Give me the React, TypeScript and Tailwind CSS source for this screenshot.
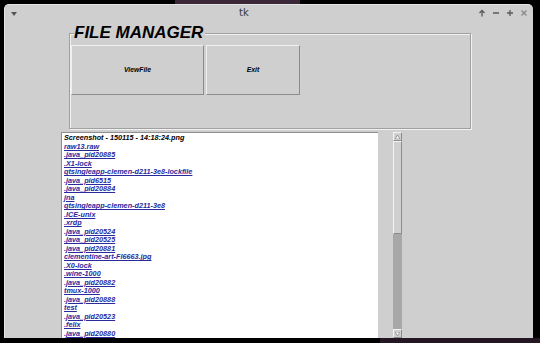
import React from 'react'

const files = [
  'Screenshot - 150115 - 14:18:24.png',
  'raw13.raw',
  '.java_pid20885',
  '.X1-lock',
  'qtsingleapp-clemen-d211-3e8-lockfile',
  '.java_pid6515',
  '.java_pid20884',
  'jna',
  'qtsingleapp-clemen-d211-3e8',
  '.ICE-unix',
  '.xrdp',
  '.java_pid20524',
  '.java_pid20525',
  '.java_pid20881',
  'clementine-art-FI6663.jpg',
  '.X0-lock',
  '.wine-1000',
  '.java_pid20882',
  'tmux-1000',
  '.java_pid20888',
  'test',
  '.java_pid20523',
  '.felix',
  '.java_pid20880',
]

function TitleButtons() {
  return (
    <div className="flex items-center gap-[6px] text-[#5a5a5a]">
      <svg width="8" height="8" viewBox="0 0 8 8" fill="none" stroke="currentColor" strokeWidth="1.3">
        <path d="M4 7.5V1.5M1.5 4L4 1.5 6.5 4" />
      </svg>
      <svg width="8" height="8" viewBox="0 0 8 8" fill="none" stroke="currentColor" strokeWidth="1.3">
        <path d="M1 4h6" />
      </svg>
      <svg width="8" height="8" viewBox="0 0 8 8" fill="none" stroke="currentColor" strokeWidth="1.3">
        <path d="M1 4h6M4 1v6" />
      </svg>
      <svg width="8" height="8" viewBox="0 0 8 8" fill="none" stroke="#8a8a8a" strokeWidth="1.3">
        <path d="M1.5 1.5l5 5M6.5 1.5l-5 5" />
      </svg>
    </div>
  )
}

export default function App() {
  return (
    <div className="relative h-[343px] w-[540px] overflow-hidden bg-black pl-[4px] pt-[4px]" style={{ fontFamily: '"Liberation Sans", Arial, sans-serif' }}>
      <div className="absolute left-[175px] top-0 h-[4px] w-[125px] bg-[#3b2838]" />
      <div className="absolute bottom-0 left-[380px] h-[5px] w-[160px] bg-[#241622]" />

      <div className="flex h-[334px] w-[529px] flex-col overflow-hidden rounded-t-[5px] border-l border-t border-[#e4e4e4] bg-[#cfcfcf]">
        {/* title bar */}
        <div className="flex h-[16px] shrink-0 items-center pl-[6px] pr-[5px]">
          <svg width="6" height="4" viewBox="0 0 6 4" className="mt-[1px]">
            <path d="M0 0h6L3 4z" fill="#555" />
          </svg>
          <span className="ml-[222px] text-[10px] leading-none text-[#3c3c3c]" style={{ fontFamily: '"DejaVu Sans", sans-serif' }}>tk</span>
          <div className="ml-auto">
            <TitleButtons />
          </div>
        </div>

        <div className="flex min-h-0 flex-1 flex-col pl-[56px]">
          {/* label frame */}
          <div className="relative ml-[8px] mt-[12px] h-[96px] w-[402px] shrink-0 border border-[#a0a0a0] shadow-[inset_1px_1px_0_#f2f2f2,1px_1px_0_#f2f2f2]">
            <span className="absolute left-[4px] top-[-11px] bg-[#cfcfcf] pr-[2px] text-[17px] font-bold italic leading-[20px] text-black">
              FILE MANAGER
            </span>
            <div className="ml-[1px] mt-[11px] flex gap-[2px]">
              <button className="flex h-[50px] w-[133px] items-center justify-center border border-b-[#8c8c8c] border-l-[#f0f0f0] border-r-[#8c8c8c] border-t-[#f0f0f0] bg-[#cfcfcf] text-[6.8px] font-bold italic text-black">
                ViewFile
              </button>
              <button className="flex h-[50px] w-[94px] items-center justify-center border border-b-[#8c8c8c] border-l-[#f0f0f0] border-r-[#8c8c8c] border-t-[#f0f0f0] bg-[#cfcfcf] text-[6.8px] font-bold italic text-black">
                Exit
              </button>
            </div>
          </div>

          {/* list + scrollbar */}
          <div className="mt-[3px] flex min-h-0 flex-1 items-stretch">
            <div className="w-[317px] overflow-hidden border-l border-t border-[#8e8e8e] bg-white pl-[2px] pt-[1px]">
              {files.map((f, i) => (
                <div
                  key={f + i}
                  className={
                    i === 0
                      ? 'h-[8.52px] whitespace-nowrap text-[7.25px] font-bold italic leading-[8.52px] text-black'
                      : 'h-[8.52px] whitespace-nowrap text-[7.25px] font-bold italic leading-[8.52px] text-[#2a2a9e] underline'
                  }
                >
                  {f}
                </div>
              ))}
            </div>

            <div className="ml-[15px] flex w-[9px] flex-col bg-[#a8a8a8]">
              <div className="flex h-[9px] shrink-0 items-center justify-center border border-b-[#8c8c8c] border-l-[#f4f4f4] border-r-[#8c8c8c] border-t-[#f4f4f4] bg-[#cfcfcf]">
                <svg width="5" height="4" viewBox="0 0 5 4">
                  <path d="M2.5 0L5 4H0z" fill="#f4f4f4" stroke="#777" strokeWidth="0.6" />
                </svg>
              </div>
              <div className="h-[93px] shrink-0 border border-b-[#8c8c8c] border-l-[#f4f4f4] border-r-[#8c8c8c] border-t-[#f4f4f4] bg-[#cfcfcf]" />
              <div className="flex-1" />
              <div className="flex h-[9px] shrink-0 items-center justify-center border border-b-[#8c8c8c] border-l-[#f4f4f4] border-r-[#8c8c8c] border-t-[#f4f4f4] bg-[#cfcfcf]">
                <svg width="5" height="4" viewBox="0 0 5 4">
                  <path d="M0 0h5L2.5 4z" fill="#f4f4f4" stroke="#777" strokeWidth="0.6" />
                </svg>
              </div>
            </div>
          </div>
        </div>
      </div>
    </div>
  )
}
